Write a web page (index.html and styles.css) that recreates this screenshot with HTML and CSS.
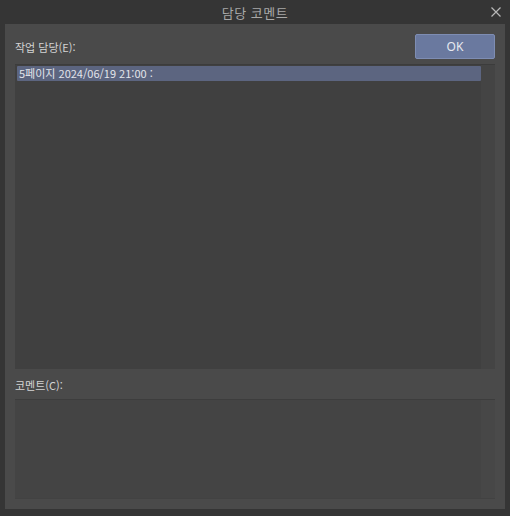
FILE: index.html
```html
<!DOCTYPE html>
<html lang="ko">
<head>
<meta charset="utf-8">
<title>담당 코멘트</title>
<link rel="stylesheet" href="styles.css">
</head>
<body>
<div class="window">
  <div class="titlebar">
    <span class="title">담당 코멘트</span>
    <svg class="close" width="10" height="10" viewBox="0 0 10 10"><path d="M0.5 0.5 L9.5 9.5 M9.5 0.5 L0.5 9.5" stroke="#b8b8b8" stroke-width="1.2" fill="none"/></svg>
  </div>
  <div class="panel">
    <div class="toprow">
      <span class="label">작업 담당(E):</span>
      <button class="ok">OK</button>
    </div>
    <div class="listbox">
      <div class="items">
        <div class="item selected">5페이지 2024/06/19 21:00 :</div>
      </div>
      <div class="scroll"></div>
    </div>
    <div class="label comment-label">코멘트(C):</div>
    <div class="commentbox">
      <div class="items"></div>
      <div class="scroll"></div>
    </div>
  </div>
</div>
</body>
</html>
```
FILE: styles.css
```css
html, body {
  margin: 0;
  padding: 0;
  background: #353535;
}
body {
  width: 510px;
  height: 516px;
  overflow: hidden;
  font-family: "Noto Sans CJK KR", "Noto Sans", sans-serif;
  color: #d6d6d6;
}
.window {
  width: 510px;
  height: 516px;
}
.titlebar {
  height: 24px;
  position: relative;
  display: flex;
  align-items: center;
  justify-content: center;
}
.title {
  font-size: 13px;
  color: #a8a8a8;
  letter-spacing: 0.5px;
}
.close {
  position: absolute;
  right: 9px;
  top: 7px;
}
.panel {
  margin: 0 5px;
  height: 485px;
  box-sizing: border-box;
  padding: 10px;
  background: #4a4a4a;
  display: flex;
  flex-direction: column;
}
.toprow {
  display: flex;
  justify-content: space-between;
  align-items: center;
  height: 25px;
  margin-bottom: 5px;
}
.label {
  font-size: 11px;
  color: #d4d4d4;
  line-height: 14px;
}
.toprow .label {
  margin-top: 1px;
}
.ok {
  width: 80px;
  height: 25px;
  box-sizing: border-box;
  border: 1px solid #7e8db3;
  border-radius: 2px;
  background: #6a799f;
  color: #e6e9f0;
  font-family: "Noto Sans", sans-serif;
  font-size: 12px;
  padding: 0;
}
.listbox {
  height: 305px;
  display: flex;
  background: #404040;
  box-sizing: border-box;
  border-top: 1px solid #3c3c3c;
}
.items {
  flex: 1;
  padding: 1px 0 0 2px;
}
.item {
  height: 15px;
  line-height: 15px;
  font-size: 11px;
  padding-left: 2px;
  color: #e2e4ea;
}
.item.selected {
  background: #5c6580;
  border-radius: 1px;
}
.scroll {
  width: 14px;
  background: #444444;
}
.comment-label {
  height: 30px;
  display: flex;
  align-items: center;
  margin-top: 1px;
  margin-bottom: -1px;
}
.commentbox {
  height: 100px;
  display: flex;
  background: #444444;
  box-sizing: border-box;
  border-top: 1px solid #3d3d3d;
  border-bottom: 1px solid #424242;
}
.commentbox .scroll {
  background: #474747;
}
```
